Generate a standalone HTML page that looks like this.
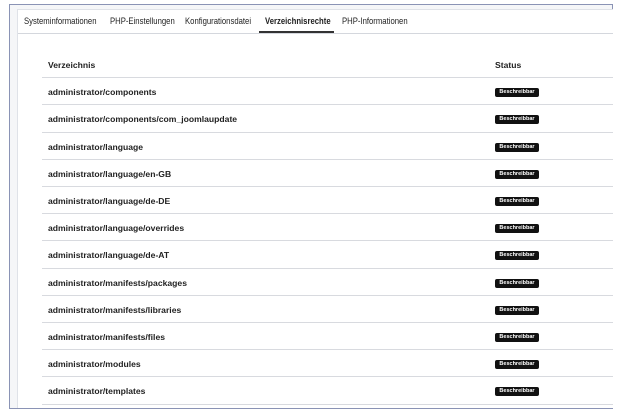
<!DOCTYPE html>
<html><head><style>
body{margin:0;width:619px;height:415px;background:#fff;font-family:"Liberation Sans",sans-serif;position:relative;overflow:hidden}
.outer{position:absolute;left:9px;top:4px;width:604px;height:405px;border:1px solid #8a93b5;background:#f5f6f8;box-sizing:border-box}
.card{position:absolute;left:17px;top:9px;width:595px;height:398px;background:#fff;border-left:1px solid #dfe2e8;border-top:1px solid #dfe2e8}
.tabs{position:absolute;left:0;top:0;right:0;height:23px;border-bottom:1px solid #d4d7dd;font-size:9.3px;color:#222}
.tab{position:absolute;top:6px;transform:scaleX(0.83);transform-origin:left;white-space:nowrap}
.ul{position:absolute;left:241px;width:75px;top:21px;height:2px;background:#333}
.row{position:absolute;left:24px;width:571px;height:27.2px;box-sizing:border-box;border-bottom:1px solid #d8dadf;font-size:8.6px;font-weight:bold;color:#222}
.row span{position:absolute;left:6px;top:9px}
.b{position:absolute;left:453px;top:10px;background:#111;color:#fff;font-size:5.5px;padding:1px 2px;border-radius:2px;width:40px;text-align:center;height:7px;line-height:7px}
</style></head><body>
<div class="outer"></div>
<div class="card">
<div class="tabs">
<span class="tab" style="left:6px">Systeminformationen</span>
<span class="tab" style="left:92px">PHP-Einstellungen</span>
<span class="tab" style="left:167px">Konfigurationsdatei</span>
<span class="tab" style="left:247px;font-weight:bold">Verzeichnisrechte</span>
<span class="tab" style="left:324px">PHP-Informationen</span>
<div class="ul"></div>
</div>
<div class="row" style="top:41px"><span>Verzeichnis</span><span style="left:453px">Status</span></div>
<div class="row" style="top:68.2px"><span>administrator/components</span><div class="b">Beschreibbar</div></div>
<div class="row" style="top:95.4px"><span>administrator/components/com_joomlaupdate</span><div class="b">Beschreibbar</div></div>
<div class="row" style="top:122.6px"><span>administrator/language</span><div class="b">Beschreibbar</div></div>
<div class="row" style="top:149.8px"><span>administrator/language/en-GB</span><div class="b">Beschreibbar</div></div>
<div class="row" style="top:177px"><span>administrator/language/de-DE</span><div class="b">Beschreibbar</div></div>
<div class="row" style="top:204.2px"><span>administrator/language/overrides</span><div class="b">Beschreibbar</div></div>
<div class="row" style="top:231.4px"><span>administrator/language/de-AT</span><div class="b">Beschreibbar</div></div>
<div class="row" style="top:258.6px"><span>administrator/manifests/packages</span><div class="b">Beschreibbar</div></div>
<div class="row" style="top:285.8px"><span>administrator/manifests/libraries</span><div class="b">Beschreibbar</div></div>
<div class="row" style="top:313px"><span>administrator/manifests/files</span><div class="b">Beschreibbar</div></div>
<div class="row" style="top:340.2px"><span>administrator/modules</span><div class="b">Beschreibbar</div></div>
<div class="row" style="top:367.4px"><span>administrator/templates</span><div class="b">Beschreibbar</div></div>
</div>
</body></html>
